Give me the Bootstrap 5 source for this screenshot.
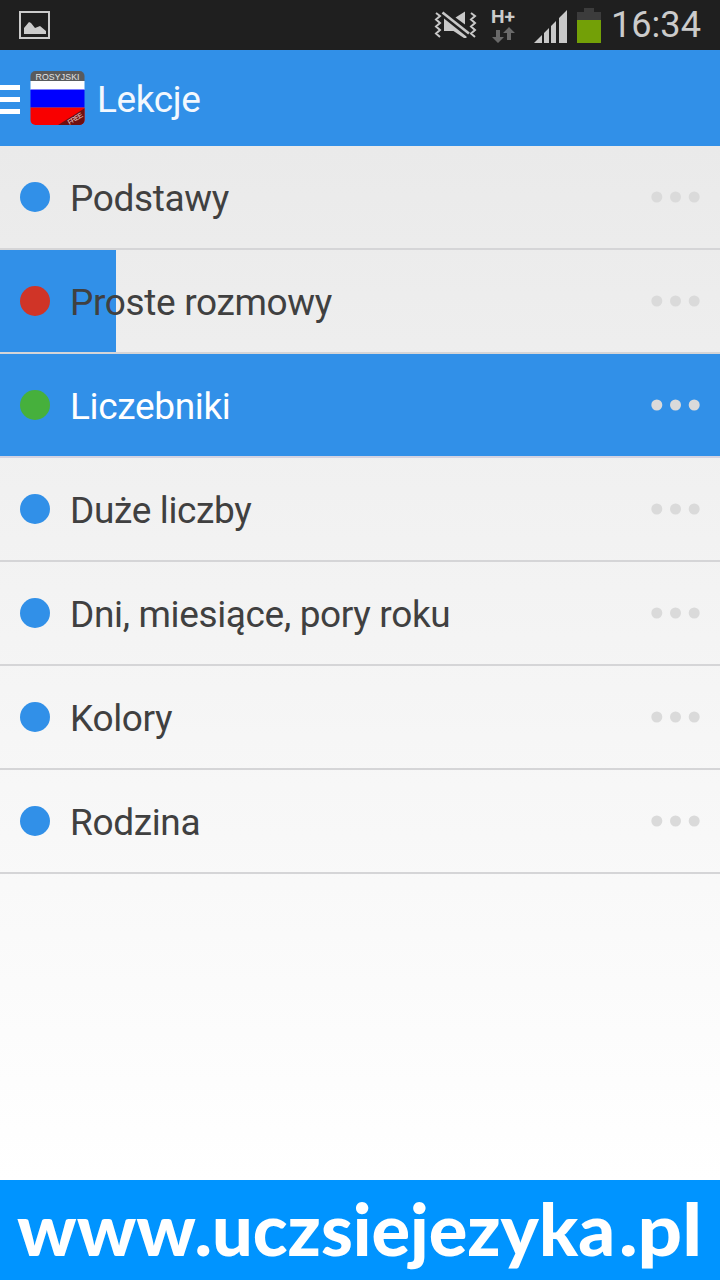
<!DOCTYPE html>
<html lang="pl">
<head>
<meta charset="utf-8">
<meta name="viewport" content="width=device-width, initial-scale=1">
<title>Lekcje</title>
<link href="https://cdn.jsdelivr.net/npm/bootstrap@5.3.0/dist/css/bootstrap.min.css" rel="stylesheet">
<style>
body{font-family:Roboto,"Noto Sans",sans-serif;height:1280px;overflow:hidden;background:#fff}
.status-bar{height:50px;background:#1f1f1f}
.app-bar{height:96px;background:#3190e8}
.app-title{font-size:37px;line-height:96px;padding-left:12px;padding-top:4px;color:#f3f8fe;letter-spacing:-.4px}
.lessons{background:linear-gradient(#eaeaea,#fff)}
.list-group>.lesson.list-group-item{height:104px;padding:0 20px;border:0;border-bottom:2px solid #d5d5d7;border-radius:0;background-color:transparent;color:#404040;margin-top:0}
.list-group>.lesson.list-group-item.active{background-color:#3190e8;color:#fff;border-color:#d3d3e2}
.lesson.partial{background:linear-gradient(#3190e8,#3190e8) 0 0/116px 100% no-repeat;background-clip:padding-box}
.lesson-name{font-size:37px;line-height:98px;margin-left:20px;padding-top:4px;white-space:nowrap;letter-spacing:-.35px}
.bullet{width:30px;height:30px;background:#3190e8}
.bullet-red{background:#d03427}
.bullet-green{background:#46b03c}
.more{color:#dadada}
.banner{height:100px;background:#0094ff}
</style>
</head>
<body class="d-flex flex-column">
<header class="status-bar flex-shrink-0">
<svg class="d-block" width="720" height="50" viewBox="0 0 720 50">
<rect x="20" y="12" width="29" height="26" fill="none" stroke="#cbcbcb" stroke-width="2"/>
<path d="M24 34v-6l5-6 2 1 4 5 5-2 6 5v3z" fill="#cbcbcb"/>
<g fill="none" stroke="#c8c8c8" stroke-width="2"><path d="M436 13l4 3-4 3.500 4 3.500-4 3.500 4 3.500-4 3.500 4 3.500M471 13l4 3-4 3.500 4 3.500-4 3.500 4 3.500-4 3.500 4 3.500"/><path d="M442.500 12.500L469 33.500" stroke-width="2.600"/></g>
<path d="M444 18.500L466.500 36.500V38H464L453.500 31H444zM455.500 17.500L465 11.500v13z" fill="#c8c8c8"/>
<text x="491" y="23" font-size="19" font-weight="700" fill="#cbcbcb" textLength="24" lengthAdjust="spacingAndGlyphs">H+</text>
<path d="M496 30h4v7h4l-6 6-6-6h4zM507 40v-7h-4l6-6 6 6h-4v7z" fill="#696969"/>
<path d="M534 43l8-8v8zM544 33l5-5v15h-5zM551 26l5-5v22h-5zM558 19l3-3v27h-3zM561 16l6-6v33h-6z" fill="#c9c9c9"/>
<path d="M558 14h1v29h-1z" fill="#1f1f1f"/>
<path d="M577 12h7V8h10v4h7v8h-24z" fill="#3c3c3c"/><path d="M577 20h24v23h-24z" fill="#73a007"/>
<text x="611" y="37" font-size="36" fill="#cbcbcb" textLength="90" lengthAdjust="spacingAndGlyphs">16:34</text>
</svg>
</header>
<nav class="app-bar d-flex align-items-center flex-shrink-0">
<svg class="flex-shrink-0" width="85" height="96" viewBox="0 0 85 96">
<path d="M0 35h20v5H0zM0 47h20v5H0zM0 59h20v5H0z" fill="#fff"/>
<clipPath id="appIcon"><rect x="30.500" y="21" width="54" height="54" rx="5"/></clipPath>
<g clip-path="url(#appIcon)"><path d="M30 21h55v10H30z" fill="#595b5d"/><path d="M30 31h55v9H30z" fill="#fff"/><path d="M30 39.500h55v18H30z" fill="#00f"/><path d="M30 57.500h55V75H30z" fill="#f90000"/><path d="M58 75l27-17v17z" fill="#6f1010"/>
<text transform="translate(69.500 75) rotate(-32)" font-family="Liberation Sans, sans-serif" font-size="7" fill="#e8cccc" textLength="16.500">FREE</text></g>
<text x="35.500" y="30" font-family="Liberation Sans, sans-serif" font-size="8.700" fill="#e4e4e4" textLength="44">ROSYJSKI</text>
</svg>
<span class="app-title">Lekcje</span>
</nav>
<svg width="0" height="0" class="d-none"><symbol id="dots" viewBox="0 0 50 12"><circle cx="6.800" cy="6" r="5.500"/><circle cx="25.500" cy="6" r="5.500"/><circle cx="44.200" cy="6" r="5.500"/></symbol></svg>
<main class="lessons flex-grow-1">
<div class="list-group list-group-flush rounded-0">
<div class="lesson list-group-item d-flex align-items-center"><span class="bullet rounded-circle"></span><span class="lesson-name">Podstawy</span><svg class="more ms-auto" width="50" height="12" fill="currentColor"><use href="#dots"/></svg></div>
<div class="lesson partial list-group-item d-flex align-items-center"><span class="bullet bullet-red rounded-circle"></span><span class="lesson-name">Proste rozmowy</span><svg class="more ms-auto" width="50" height="12" fill="currentColor"><use href="#dots"/></svg></div>
<div class="lesson active list-group-item d-flex align-items-center"><span class="bullet bullet-green rounded-circle"></span><span class="lesson-name">Liczebniki</span><svg class="more ms-auto" width="50" height="12" fill="currentColor"><use href="#dots"/></svg></div>
<div class="lesson list-group-item d-flex align-items-center"><span class="bullet rounded-circle"></span><span class="lesson-name">Duże liczby</span><svg class="more ms-auto" width="50" height="12" fill="currentColor"><use href="#dots"/></svg></div>
<div class="lesson list-group-item d-flex align-items-center"><span class="bullet rounded-circle"></span><span class="lesson-name">Dni, miesiące, pory roku</span><svg class="more ms-auto" width="50" height="12" fill="currentColor"><use href="#dots"/></svg></div>
<div class="lesson list-group-item d-flex align-items-center"><span class="bullet rounded-circle"></span><span class="lesson-name">Kolory</span><svg class="more ms-auto" width="50" height="12" fill="currentColor"><use href="#dots"/></svg></div>
<div class="lesson list-group-item d-flex align-items-center"><span class="bullet rounded-circle"></span><span class="lesson-name">Rodzina</span><svg class="more ms-auto" width="50" height="12" fill="currentColor"><use href="#dots"/></svg></div>
</div>
</main>
<footer class="banner flex-shrink-0">
<svg class="d-block" width="720" height="100" font-family="Lato, sans-serif" font-weight="900" font-size="73" fill="#fff"><text x="17" y="76" textLength="195" lengthAdjust="spacingAndGlyphs">www.</text><text x="212" y="76" textLength="403" lengthAdjust="spacingAndGlyphs">uczsiejezyka</text><text x="619" y="76" textLength="83" lengthAdjust="spacingAndGlyphs">.pl</text></svg>
</footer>
</body>
</html>
